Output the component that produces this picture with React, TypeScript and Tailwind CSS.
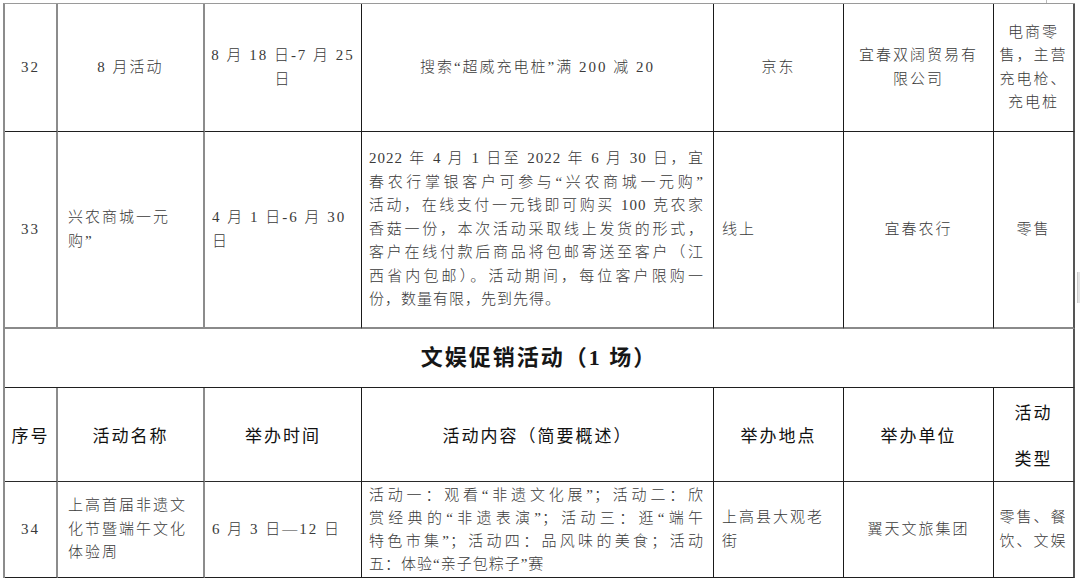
import React from "react";

const BODY =
  "font-['Liberation_Serif','Noto_Sans_CJK_SC',serif] font-light text-[15px] tracking-[2px] leading-[23.5px] text-[#3a3a3a]";
const HEAD = "font-['Noto_Sans_CJK_SC','Noto_Sans',sans-serif] font-normal text-[17px] leading-[24px] text-[#111]";

// right border of each column
const COL = [
  "border-r-2 border-r-[#8c8c8c]",
  "border-r-2 border-r-[#8c8c8c]",
  "border-r border-r-[#1a1a1a]",
  "border-r border-r-[#1a1a1a]",
  "border-r border-r-[#1a1a1a]",
  "border-r border-r-[#1a1a1a]",
  "border-r-2 border-r-[#555]",
];

function Justified({ lines }: { lines: string[] }) {
  return (
    <div className="tracking-[1px]">
      {lines.map((line, i) => (
        <div
          key={i}
          className={i < lines.length - 1 ? "whitespace-nowrap text-justify [text-align-last:justify]" : "whitespace-nowrap"}
        >
          {line}
        </div>
      ))}
    </div>
  );
}

export default function App() {
  const row32 = "border-b border-b-[#1f1f1f]";
  const row33 = "border-b-2 border-b-[#8a8a8a]";
  const rowTitle = "border-b border-b-[#1f1f1f]";
  const rowHead = "border-b border-b-[#2a2a2a]";
  const row34 = "border-b border-b-[#1f1f1f]";

  return (
    <div className="w-[1080px] h-[581px] bg-white overflow-hidden pt-[3px] pl-[3px] relative">
      <table className="w-[1072px] table-fixed border-separate border-spacing-0 border-l-2 border-t border-l-[#8c8c8c] border-t-[#9a9a9a]">
        <colgroup>
          <col className="w-[53px]" />
          <col className="w-[147px]" />
          <col className="w-[157px]" />
          <col className="w-[352px]" />
          <col className="w-[130px]" />
          <col className="w-[150px]" />
          <col className="w-[81px]" />
        </colgroup>
        <tbody className={BODY}>
          {/* 32 */}
          <tr className="h-[128px]">
            <td className={`${COL[0]} ${row32} text-center`}>32</td>
            <td className={`${COL[1]} ${row32} text-center`}>8 月活动</td>
            <td className={`${COL[2]} ${row32} text-center`}>
              8 月 18 日-7 月 25
              <br />日
            </td>
            <td className={`${COL[3]} ${row32} text-center`}>搜索“超威充电桩”满 200 减 20</td>
            <td className={`${COL[4]} ${row32} text-center`}>京东</td>
            <td className={`${COL[5]} ${row32} text-center`}>
              宜春双阔贸易有
              <br />
              限公司
            </td>
            <td className={`${COL[6]} ${row32} text-center`}>
              电商零
              <br />
              售，主营
              <br />
              充电枪、
              <br />
              充电桩
            </td>
          </tr>

          {/* 33 */}
          <tr className="h-[197px]">
            <td className={`${COL[0]} ${row33} text-center`}>33</td>
            <td className={`${COL[1]} ${row33} pl-[10px]`}>
              兴农商城一元
              <br />
              购”
            </td>
            <td className={`${COL[2]} ${row33} pl-[7px]`}>
              4 月 1 日-6 月 30
              <br />日
            </td>
            <td className={`${COL[3]} ${row33} pl-[7px] pr-[9px]`}>
              <Justified
                lines={[
                  "2022 年 4 月 1 日至 2022 年 6 月 30 日，宜",
                  "春农行掌银客户可参与“兴农商城一元购”",
                  "活动，在线支付一元钱即可购买 100 克农家",
                  "香菇一份，本次活动采取线上发货的形式，",
                  "客户在线付款后商品将包邮寄送至客户（江",
                  "西省内包邮）。活动期间，每位客户限购一",
                  "份，数量有限，先到先得。",
                ]}
              />
            </td>
            <td className={`${COL[4]} ${row33} pl-[8px]`}>线上</td>
            <td className={`${COL[5]} ${row33} text-center`}>宜春农行</td>
            <td className={`${COL[6]} ${row33} text-center`}>零售</td>
          </tr>

          {/* section title */}
          <tr className="h-[59px]">
            <td
              colSpan={7}
              className={`${COL[6]} ${rowTitle} text-center font-['Liberation_Serif','Noto_Sans_CJK_SC',serif] text-[22px] font-semibold tracking-[2px] text-[#161616]`}
            >
              文娱促销活动（1 场）
            </td>
          </tr>

          {/* header */}
          <tr className={`h-[94px] ${HEAD}`}>
            <td className={`${COL[0]} ${rowHead} text-center ${HEAD}`}>序号</td>
            <td className={`${COL[1]} ${rowHead} text-center ${HEAD}`}>活动名称</td>
            <td className={`${COL[2]} ${rowHead} text-center ${HEAD}`}>举办时间</td>
            <td className={`${COL[3]} ${rowHead} text-center ${HEAD}`}>活动内容（简要概述）</td>
            <td className={`${COL[4]} ${rowHead} text-center ${HEAD}`}>举办地点</td>
            <td className={`${COL[5]} ${rowHead} text-center ${HEAD}`}>举办单位</td>
            <td className={`${COL[6]} ${rowHead} text-center ${HEAD} leading-[46px]`}>
              活动
              <br />
              类型
            </td>
          </tr>

          {/* 34 */}
          <tr className="h-[96px]">
            <td className={`${COL[0]} ${row34} text-center`}>34</td>
            <td className={`${COL[1]} ${row34} pl-[10px]`}>
              上高首届非遗文
              <br />
              化节暨端午文化
              <br />
              体验周
            </td>
            <td className={`${COL[2]} ${row34} pl-[7px]`}>6 月 3 日—12 日</td>
            <td className={`${COL[3]} ${row34} pl-[7px] pr-[9px] leading-[23px]`}>
              <Justified
                lines={[
                  "活动一：观看“非遗文化展”；活动二：欣",
                  "赏经典的“非遗表演”；活动三：逛“端午",
                  "特色市集”；活动四：品风味的美食；活动",
                  "五：体验“亲子包粽子”赛",
                ]}
              />
            </td>
            <td className={`${COL[4]} ${row34} pl-[8px]`}>
              上高县大观老
              <br />街
            </td>
            <td className={`${COL[5]} ${row34} text-center`}>翼天文旅集团</td>
            <td className={`${COL[6]} ${row34} text-center`}>
              零售、餐
              <br />
              饮、文娱
            </td>
          </tr>
        </tbody>
      </table>

      {/* scan artifacts at the page edge */}
      <div className="absolute left-[1046px] top-0 w-px h-[3px] bg-[#bbb]" />
      <div className="absolute left-[1077px] top-[272px] w-[3px] h-[31px] bg-[#e4e4e4] border-l border-[#ccc]" />
    </div>
  );
}
